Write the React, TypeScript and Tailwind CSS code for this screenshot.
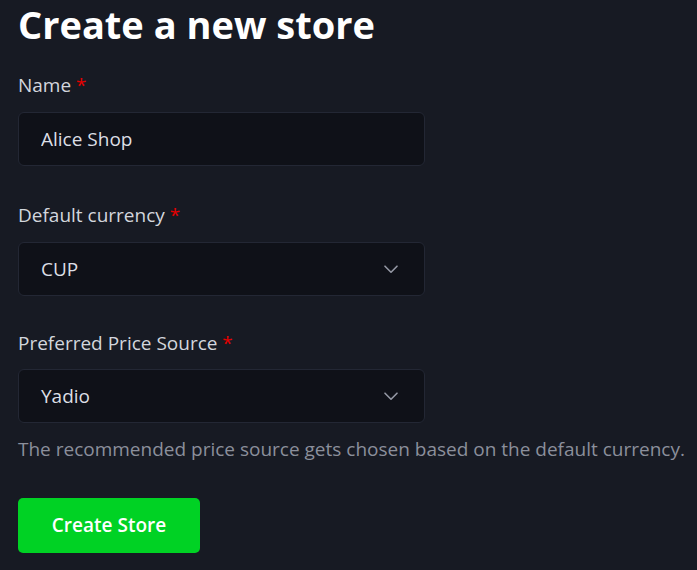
import { useState } from "react";

const Chevron = () => (
  <svg width="14" height="9" viewBox="0 0 14 9" fill="none" className="shrink-0">
    <path d="M1 1.2l6 6 6-6" stroke="#9498a4" strokeWidth="1.6" strokeLinecap="round" strokeLinejoin="round" />
  </svg>
);

const Label = ({ children }: { children: string }) => (
  <label className="block text-[19px] leading-[27px] text-[#d3d6dd]">
    {children} <span className="text-[#e50000]">*</span>
  </label>
);

export default function App() {
  const [name, setName] = useState("Alice Shop");

  return (
    <div
      className="min-h-[570px] w-[697px] overflow-hidden bg-[#171a23] px-[18px]"
      style={{ fontFamily: '"Open Sans", sans-serif' }}
    >
      <h1 className="text-[38px] leading-[49px] font-bold text-white">Create a new store</h1>

      <div className="mt-[23px]">
        <Label>Name</Label>
        <input
          value={name}
          onChange={(e) => setName(e.target.value)}
          className="mt-[13px] block h-[54px] w-[407px] rounded-[6px] border border-[#232734] bg-[#0f1118] px-[22px] text-[19px] text-[#dcdfe5] outline-none"
        />
      </div>

      <div className="mt-[36px]">
        <Label>Default currency</Label>
        <div className="mt-[13px] flex h-[54px] w-[407px] items-center justify-between rounded-[6px] border border-[#232734] bg-[#0f1118] pl-[22px] pr-[26px] text-[19px] text-[#dcdfe5]">
          <span>CUP</span>
          <Chevron />
        </div>
      </div>

      <div className="mt-[34px]">
        <Label>Preferred Price Source</Label>
        <div className="mt-[12px] flex h-[54px] w-[407px] items-center justify-between rounded-[6px] border border-[#232734] bg-[#0f1118] pl-[22px] pr-[26px] text-[19px] text-[#dcdfe5]">
          <span>Yadio</span>
          <Chevron />
        </div>
        <p className="mt-[13px] text-[19px] leading-[27px] whitespace-nowrap text-[#8b8f9b]">
          The recommended price source gets chosen based on the default currency.
        </p>
      </div>

      <button className="mt-[35px] flex h-[55px] w-[182px] items-center justify-center rounded-[5px] bg-[#00d224] text-[19px] font-semibold text-white">
        Create Store
      </button>
    </div>
  );
}
